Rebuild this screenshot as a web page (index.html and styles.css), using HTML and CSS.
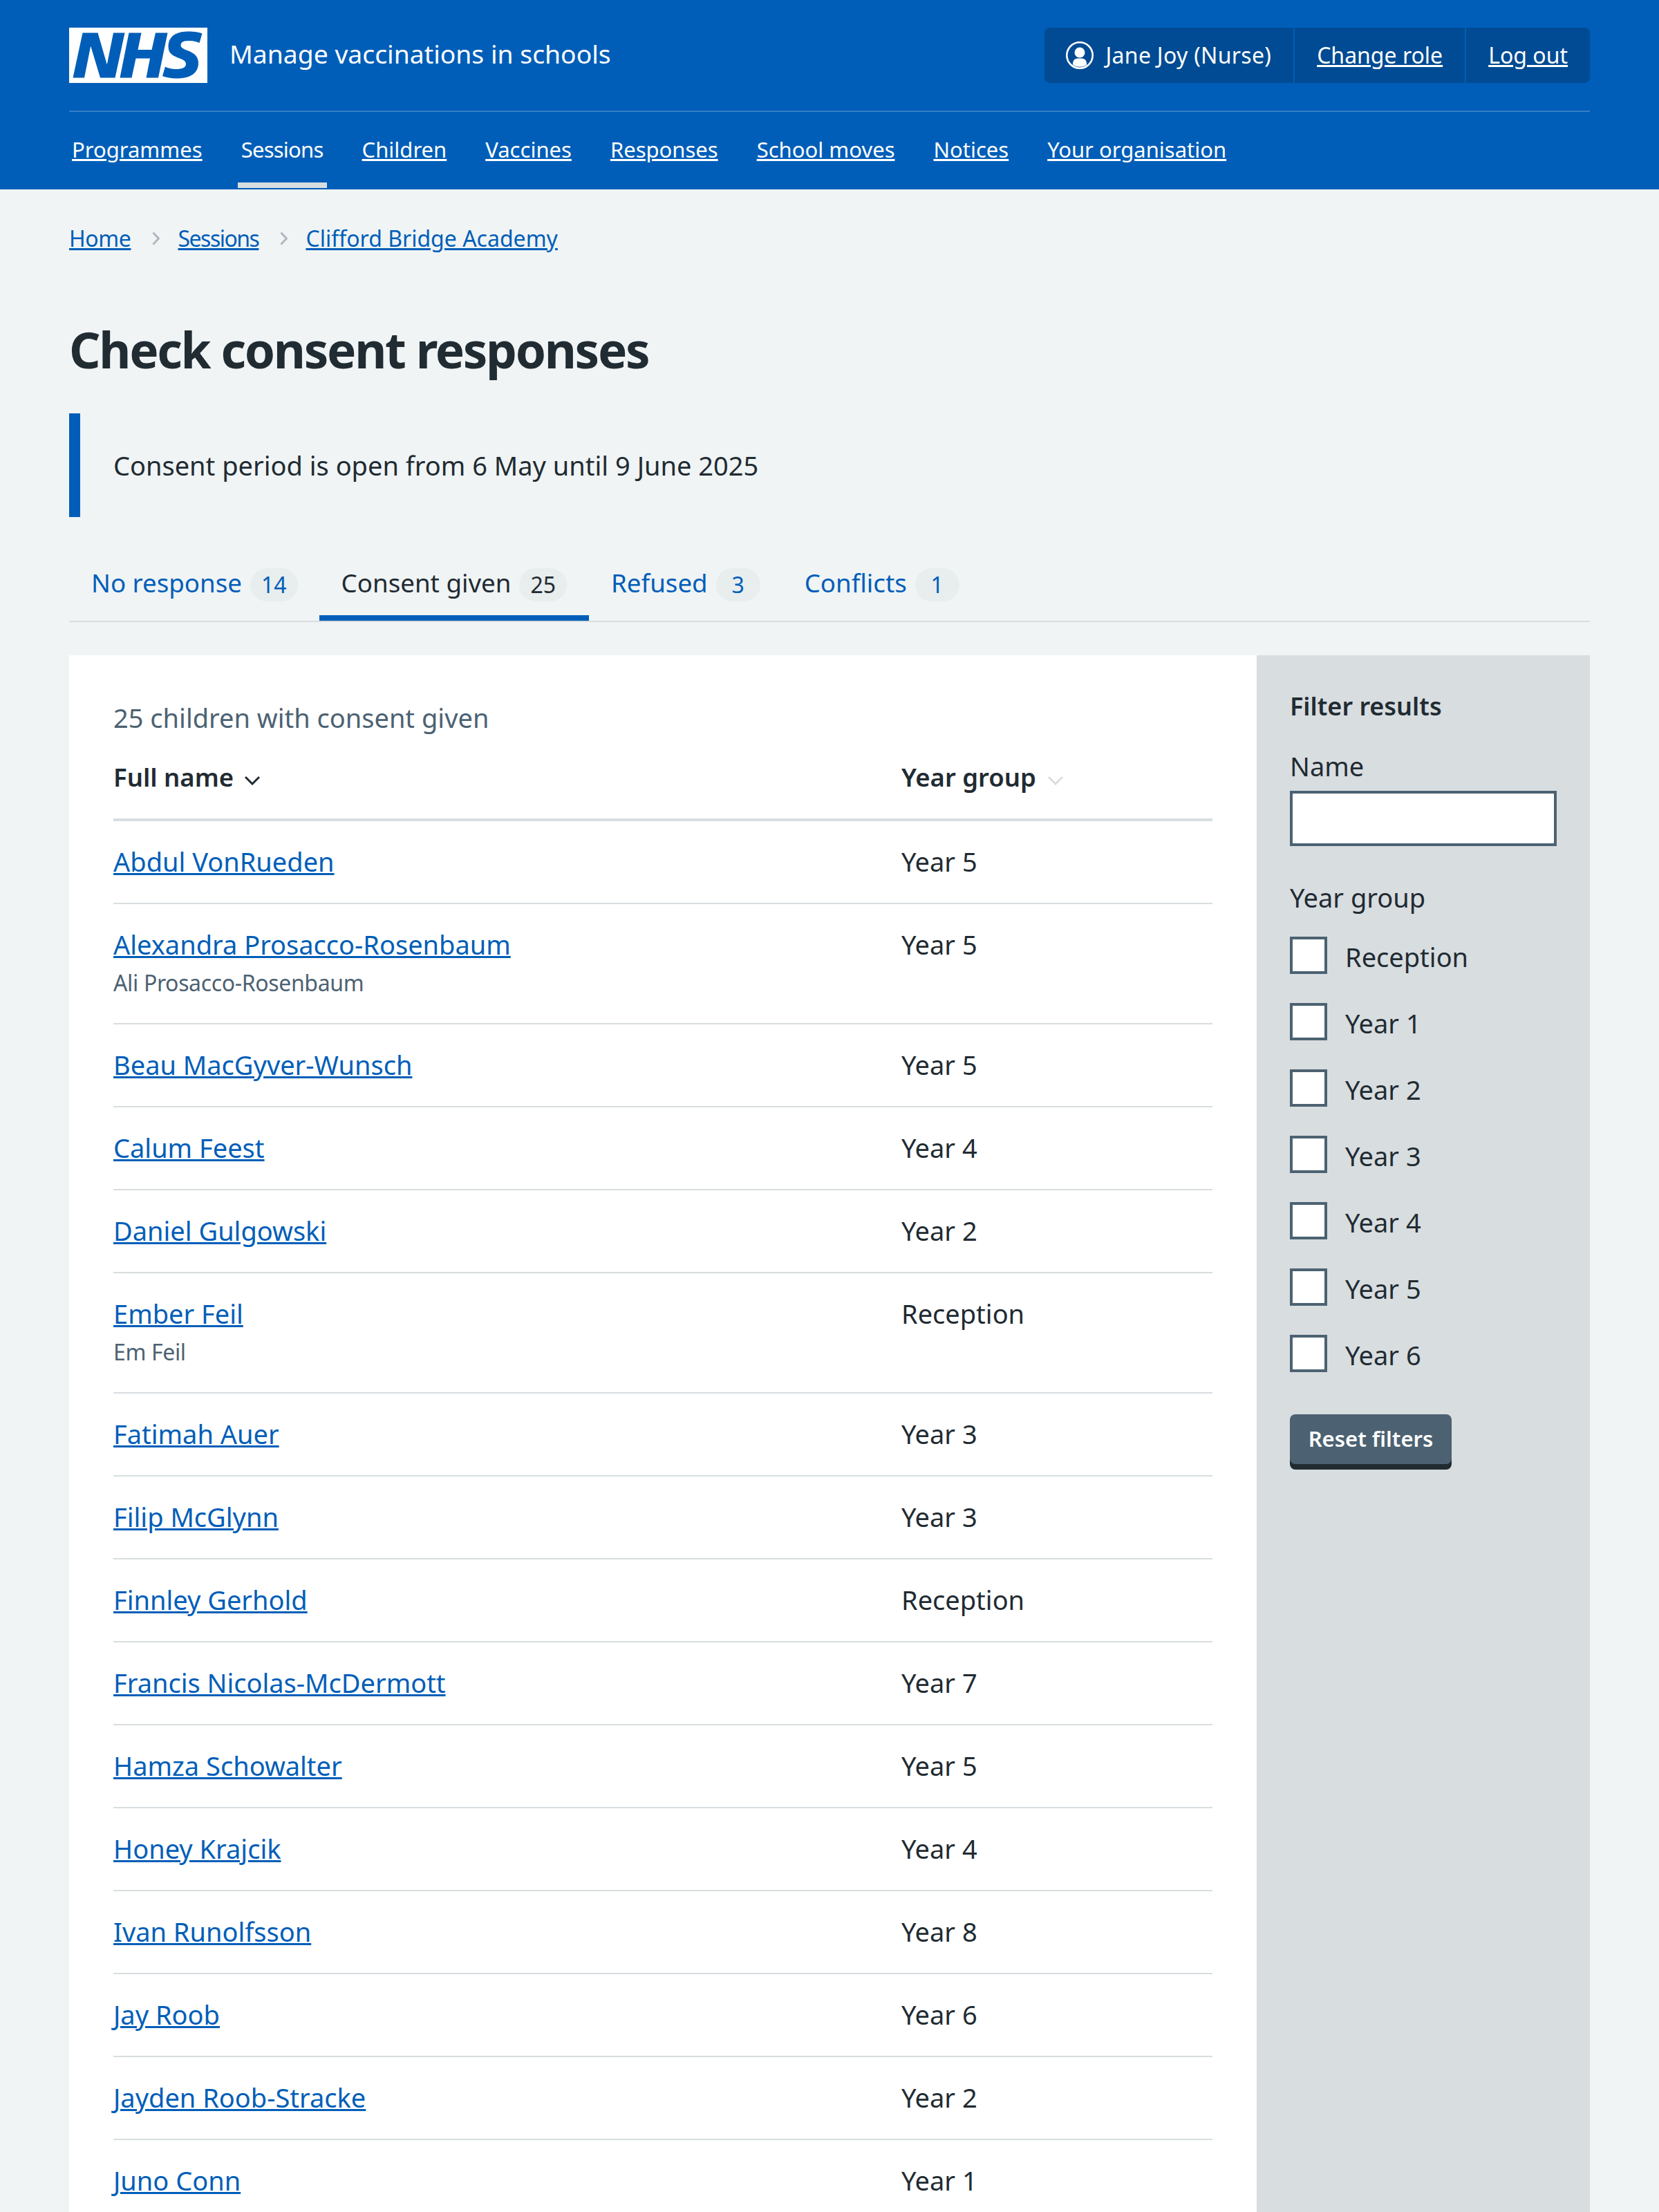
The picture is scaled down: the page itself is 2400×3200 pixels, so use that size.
FILE: index.html
```html
<!DOCTYPE html>
<html lang="en">
<head>
    <meta charset="UTF-8">
    <meta name="viewport" content="width=device-width, initial-scale=1.0">
    <title>Check consent responses</title>
    <link rel="stylesheet" href="styles.css">
</head>
<body>
    <header class="site-header">
        <div class="header-top">
            <a class="brand" href="#">
                <svg class="nhs-logo" viewBox="0 0 40 16" role="img" aria-label="NHS">
                    <path fill="#fff" d="M0 0h40v16H0z"/>
                    <path fill="#005eb8" d="M3.9 1.5h4.4l2.6 9h.1l1.8-9h3.3l-2.8 13H9l-2.7-9h-.1l-1.8 9H1.1M17.3 1.5h3.6l-1 4.9h4L25 1.5h3.5l-2.7 13h-3.5l1.1-5.6h-4.1l-1.2 5.6h-3.4M37.7 4.4c-.7-.3-1.6-.6-2.9-.6-1.4 0-2.5.2-2.5 1.3 0 1.8 5.1 1.2 5.1 5.1 0 3.6-3.3 4.5-6.4 4.5-1.3 0-2.9-.3-4-.7l.8-2.7c.7.4 2.1.7 3.2.7s2.8-.2 2.8-1.5c0-2.1-5.1-1.3-5.1-5 0-3.4 2.9-4.4 5.8-4.4 1.6 0 3.1.2 4 .6"/>
                </svg>
                <span class="service-name">Manage vaccinations in schools</span>
            </a>
            <div class="account">
                <div class="account-item account-user">
                    <svg class="account-icon" viewBox="0 0 40 40">
                        <circle cx="20" cy="20" r="18.7" fill="none" stroke="#fff" stroke-width="2.6"/>
                        <circle cx="20" cy="16" r="7.5" fill="#fff"/>
                        <path fill="#fff" d="M10 33.5V31a7 7 0 0 1 7-6.5h6a7 7 0 0 1 7 6.5v2.500a17 17 0 0 1-20 0Z"/>
                    </svg>
                    <span class="account-name">Jane Joy (Nurse)</span>
                </div>
                <div class="account-item"><a href="#">Change role</a></div>
                <div class="account-item"><a href="#">Log out</a></div>
            </div>
        </div>
        <nav class="main-nav">
            <a href="#">Programmes</a>
            <a href="#" class="current">Sessions</a>
            <a href="#">Children</a>
            <a href="#">Vaccines</a>
            <a href="#">Responses</a>
            <a href="#">School moves</a>
            <a href="#">Notices</a>
            <a href="#">Your organisation</a>
        </nav>
    </header>

    <main class="container">
        <ol class="breadcrumb">
            <li><a href="#" class="crumb-home">Home</a></li>
            <li><svg class="crumb-sep" viewBox="0 0 11 20"><path d="M1.500 1.500l8 8.500-8 8.500"/></svg><a href="#" class="crumb-tight">Sessions</a></li>
            <li><svg class="crumb-sep" viewBox="0 0 11 20"><path d="M1.500 1.500l8 8.500-8 8.500"/></svg><a href="#">Clifford Bridge Academy</a></li>
        </ol>

        <h1>Check consent responses</h1>

        <div class="inset">Consent period is open from 6 May until 9 June 2025</div>

        <ul class="tabs">
            <li class="first"><a href="#">No response <span class="count">14</span></a></li>
            <li class="selected"><a href="#">Consent given <span class="count">25</span></a></li>
            <li><a href="#">Refused <span class="count">3</span></a></li>
            <li><a href="#">Conflicts <span class="count">1</span></a></li>
        </ul>

        <div class="panels">
            <section class="results">
                <p class="result-count">25 children with consent given</p>
                <table class="patients">
                    <thead>
                        <tr>
                            <th class="col-name">Full name <svg class="sort" viewBox="0 0 24 14"><path d="M2 2l10 10 10-10"/></svg></th>
                            <th>Year group <svg class="sort off" viewBox="0 0 24 14"><path d="M2 2l10 10 10-10"/></svg></th>
                        </tr>
                    </thead>
                    <tbody>
                        <tr><td><a href="#">Abdul VonRueden</a></td><td>Year 5</td></tr>
                        <tr><td><a href="#">Alexandra Prosacco-Rosenbaum</a><span class="known-as">Ali Prosacco-Rosenbaum</span></td><td>Year 5</td></tr>
                        <tr><td><a href="#">Beau MacGyver-Wunsch</a></td><td>Year 5</td></tr>
                        <tr><td><a href="#">Calum Feest</a></td><td>Year 4</td></tr>
                        <tr><td><a href="#">Daniel Gulgowski</a></td><td>Year 2</td></tr>
                        <tr><td><a href="#">Ember Feil</a><span class="known-as">Em Feil</span></td><td>Reception</td></tr>
                        <tr><td><a href="#">Fatimah Auer</a></td><td>Year 3</td></tr>
                        <tr><td><a href="#">Filip McGlynn</a></td><td>Year 3</td></tr>
                        <tr><td><a href="#">Finnley Gerhold</a></td><td>Reception</td></tr>
                        <tr><td><a href="#">Francis Nicolas-McDermott</a></td><td>Year 7</td></tr>
                        <tr><td><a href="#">Hamza Schowalter</a></td><td>Year 5</td></tr>
                        <tr><td><a href="#">Honey Krajcik</a></td><td>Year 4</td></tr>
                        <tr><td><a href="#">Ivan Runolfsson</a></td><td>Year 8</td></tr>
                        <tr><td><a href="#">Jay Roob</a></td><td>Year 6</td></tr>
                        <tr><td><a href="#">Jayden Roob-Stracke</a></td><td>Year 2</td></tr>
                        <tr><td><a href="#">Juno Conn</a></td><td>Year 1</td></tr>
                    </tbody>
                </table>
            </section>

            <aside class="filters">
                <h2>Filter results</h2>
                <label class="field-label" for="name">Name</label>
                <input class="text-input" id="name" type="text">
                <div class="field-label group-label">Year group</div>
                <div class="checks">
                    <label class="check"><span class="box"></span><span class="check-text">Reception</span></label>
                    <label class="check"><span class="box"></span><span class="check-text">Year 1</span></label>
                    <label class="check"><span class="box"></span><span class="check-text">Year 2</span></label>
                    <label class="check"><span class="box"></span><span class="check-text">Year 3</span></label>
                    <label class="check"><span class="box"></span><span class="check-text">Year 4</span></label>
                    <label class="check"><span class="box"></span><span class="check-text">Year 5</span></label>
                    <label class="check"><span class="box"></span><span class="check-text">Year 6</span></label>
                </div>
                <button class="reset-btn">Reset filters</button>
            </aside>
        </div>
    </main>
</body>
</html>
```

FILE: styles.css
```css
* {
    box-sizing: border-box;
}
html, body {
    height: 3200px;
    overflow: hidden;
}
body {
    margin: 0;
    font-family: "Noto Sans", "Open Sans", Arial, sans-serif;
    font-size: 38px;
    line-height: 56px;
    color: #212b32;
    background: #f0f4f5;
}
a {
    color: #005eb8;
}
.site-header {
    height: 274px;
    padding: 40px 100px 0;
    background: #005eb8;
    color: #fff;
}
.site-header a {
    color: #fff;
}
.header-top {
    display: flex;
    justify-content: space-between;
    height: 122px;
    border-bottom: 2px solid #337ec6;
}
.brand {
    display: flex;
    align-items: center;
    height: 80px;
    gap: 32px;
    text-decoration: none;
}
.nhs-logo {
    flex: none;
    width: 200px;
    height: 80px;
}
.service-name {
    padding-bottom: 4px;
    font-size: 37.3px;
}
.account {
    display: flex;
    height: 80px;
    background: #004b93;
    border-radius: 8px;
    font-size: 32px;
}
.account-item {
    display: flex;
    align-items: center;
    gap: 18px;
    padding: 0 32px;
    border-left: 2px solid #005eb8;
}
.account-user {
    padding-left: 31px;
    border-left: 0;
}
.account-name {
    letter-spacing: 0.3px;
}
.account-icon {
    width: 40px;
    height: 40px;
}
.main-nav {
    display: flex;
    align-items: center;
    height: 108px;
    gap: 56px;
    padding-left: 4px;
    font-size: 31px;
}
.main-nav a {
    position: relative;
}
.main-nav a.current {
    text-decoration: none;
    letter-spacing: -0.75px;
}
.main-nav a.current::after {
    content: "";
    position: absolute;
    left: -5px;
    right: -5px;
    top: 76px;
    height: 8px;
    background: #d8dde0;
}
.container {
    padding: 0 100px;
}
.breadcrumb {
    display: flex;
    margin: 0;
    padding: 48px 0 0;
    list-style: none;
    font-size: 32px;
    line-height: 46px;
}
.breadcrumb li {
    display: flex;
    align-items: center;
}
.crumb-home {
    letter-spacing: -0.4px;
}
.crumb-tight {
    letter-spacing: -1.5px;
}
.crumb-sep {
    width: 11px;
    height: 20px;
    margin: 0 26px 0 31px;
    fill: none;
    stroke: #aeb7bd;
    stroke-width: 2.8;
}
h1 {
    margin: 90px 0 0;
    font-size: 71px;
    line-height: 96px;
    font-weight: 700;
    letter-spacing: -2.3px;
}
.inset {
    display: flex;
    align-items: center;
    height: 150px;
    margin-top: 44px;
    padding-left: 48px;
    border-left: 16px solid #005eb8;
}
.tabs {
    display: flex;
    height: 104px;
    margin: 48px 0 0;
    padding: 0;
    list-style: none;
    border-bottom: 2px solid #d8dde0;
    font-size: 36.7px;
}
.tabs li {
    height: 102px;
    padding: 0 32px;
}
.tabs .first {
    padding-right: 31px;
}
.tabs a {
    text-decoration: none;
    display: flex;
    align-items: center;
    gap: 12px;
    height: 94px;
}
.tabs .selected {
    border-bottom: 8px solid #005eb8;
}
.tabs .selected a {
    color: #212b32;
}
.count {
    display: inline-block;
    min-width: 64px;
    height: 48px;
    margin-top: 6px;
    padding: 0 16px;
    border-radius: 24px;
    background: #e8edee;
    font-size: 32px;
    line-height: 48px;
    text-align: center;
}
.panels {
    display: flex;
    margin-top: 48px;
    height: 2300px;
}
.results {
    flex: 1;
    padding: 62px 64px 0;
    background: #fff;
}
.result-count {
    margin: 0;
    color: #4c6272;
}
.patients {
    width: 100%;
    border-collapse: collapse;
}
.patients th {
    padding: 30px 0 32px;
    text-align: left;
    font-weight: 600;
    font-size: 36.5px;
    border-bottom: 4px solid #d8dde0;
}
.patients .col-name {
    width: 1140px;
}
.sort {
    width: 24px;
    height: 14px;
    margin-left: 5px;
    vertical-align: 2px;
    fill: none;
    stroke: #212b32;
    stroke-width: 3;
}
.sort.off {
    margin-left: 7px;
    stroke: #d8dde0;
}
.patients td {
    padding: 30px 0 32px;
    vertical-align: top;
    border-bottom: 2px solid #d8dde0;
}
.known-as {
    display: block;
    margin-top: 4px;
    margin-bottom: 2px;
    font-size: 32px;
    line-height: 48px;
    letter-spacing: -0.35px;
    color: #4c6272;
}
.filters {
    width: 482px;
    padding: 46px 48px;
    background: #d8dde0;
}
.filters h2 {
    margin: 0;
    font-size: 36px;
    line-height: 56px;
    font-weight: 600;
}
.field-label {
    display: block;
    margin-top: 30px;
}
.text-input {
    display: block;
    width: 386px;
    height: 80px;
    margin-top: 8px;
    border: 4px solid #4c6272;
    background: #fff;
    border-radius: 0;
}
.group-label {
    margin-top: 46px;
}
.checks {
    display: flex;
    flex-direction: column;
    gap: 42px;
    margin-top: 29px;
}
.check {
    display: flex;
    align-items: center;
    gap: 26px;
    height: 54px;
}
.check-text {
    padding-top: 4px;
}
.box {
    width: 54px;
    height: 54px;
    border: 4px solid #4c6272;
    background: #fff;
}
.reset-btn {
    display: block;
    width: 234px;
    height: 72px;
    margin-top: 61px;
    padding: 0 0 3px;
    border: 0;
    border-radius: 8px;
    background: #4c6272;
    box-shadow: 0 8px 0 #212b32;
    color: #fff;
    font-family: inherit;
    font-size: 31px;
    font-weight: 600;
}
```
